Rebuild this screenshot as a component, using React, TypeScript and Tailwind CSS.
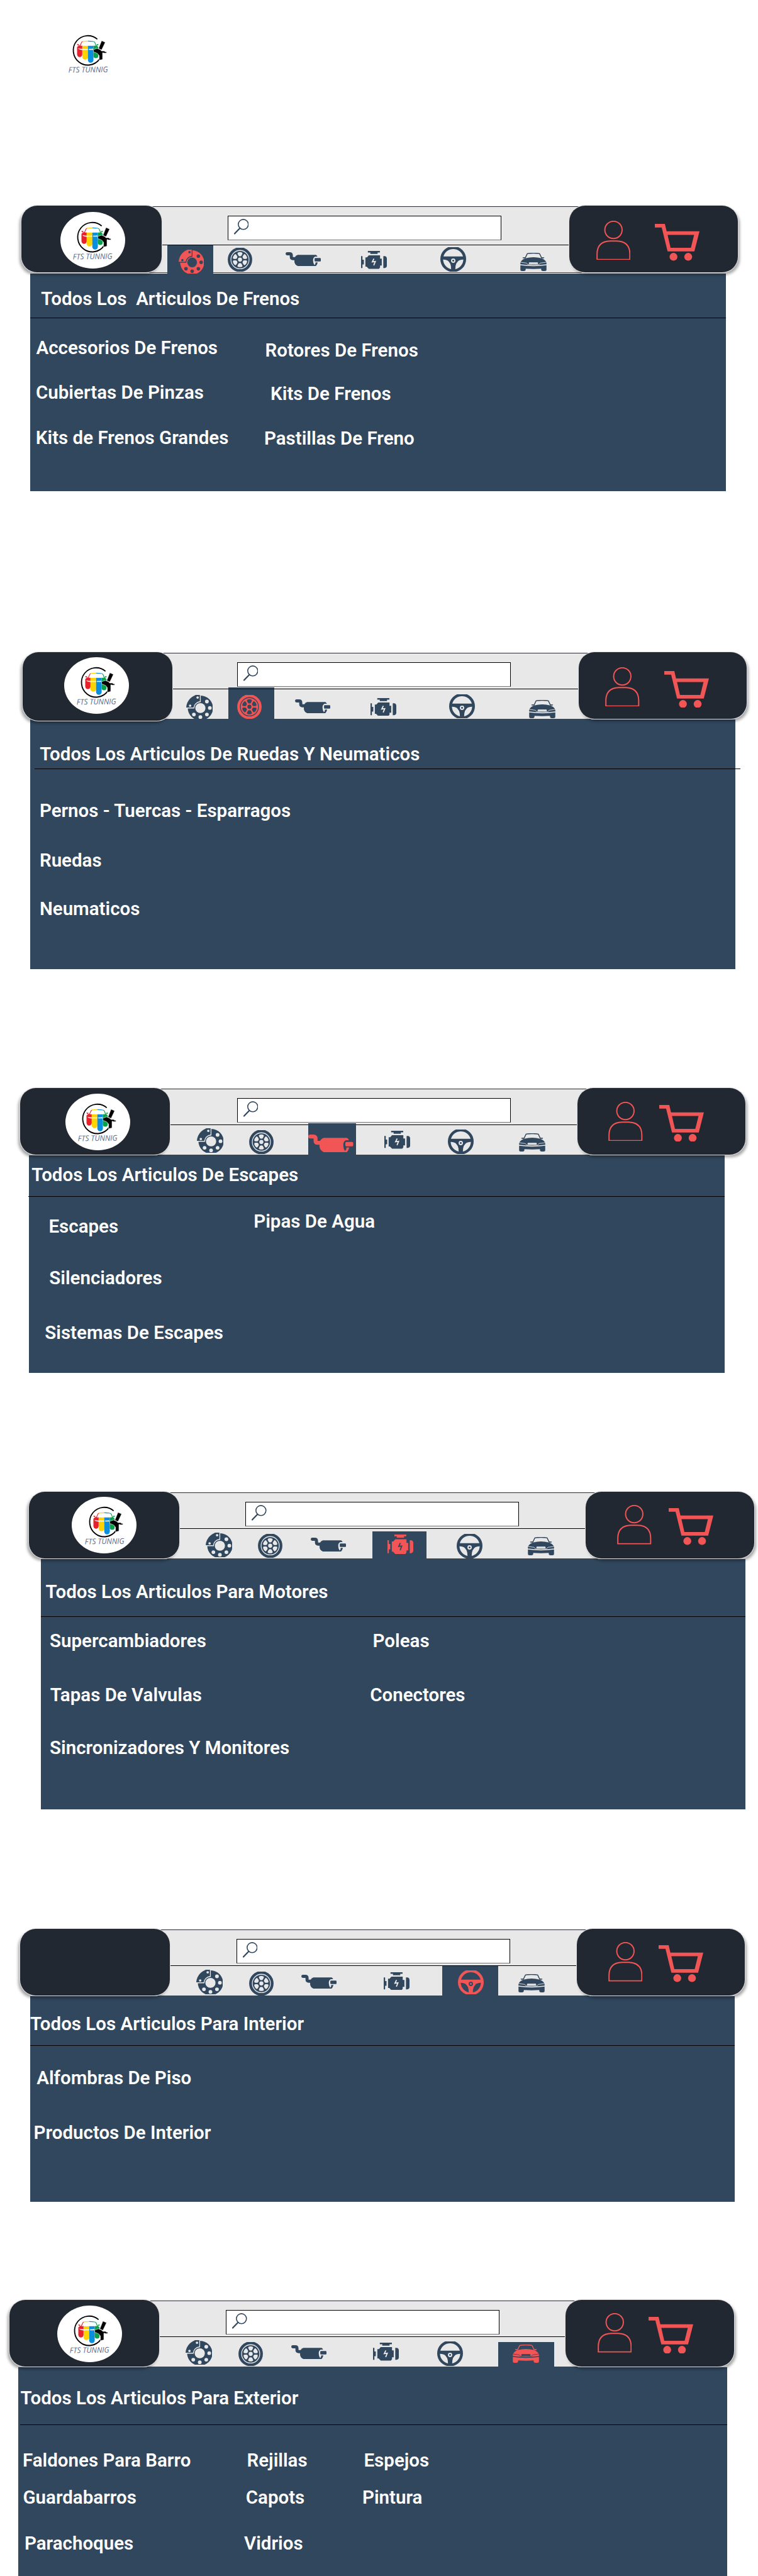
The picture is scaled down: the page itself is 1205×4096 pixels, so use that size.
import type { ReactNode } from "react";

type IconProps = { className: string; ink?: string; back?: string };

const NAVY = "#31475d";
const CORAL = "#f15555";
const BAR = "#e8e8e8";

function Svg({ box, className, children }: { box: string; className: string; children: ReactNode }) {
  return (
    <svg viewBox={box} preserveAspectRatio="none" className={"block shrink-0 " + className}>
      {children}
    </svg>
  );
}

function Disc({ className, ink = NAVY, back = BAR }: IconProps) {
  return (
    <Svg box="0 0 54 51" className={"overflow-hidden " + className}>
      <path fill={ink} d="M28 -1.5V13A14.5 14.5 0 0 0 15 26H0A29 29 0 0 1 28 -1.5Z" />
      <path fill={ink} d="M29.7 1.4A25.8 25.8 0 1 1 3.2 28H16.6A12.6 12.6 0 0 1 29.7 15Z" />
      <g fill={back}>
        <circle cx="29" cy="27.3" r="10.4" />
        <circle cx="42.3" cy="13.7" r="3.8" />
        <circle cx="48.3" cy="27" r="3.8" />
        <circle cx="42.3" cy="40.7" r="3.8" />
        <circle cx="29" cy="46" r="3.8" />
        <circle cx="15.7" cy="40.7" r="3.8" />
        <circle cx="23.3" cy="5.3" r="2.5" />
        <circle cx="8" cy="22.3" r="2.5" />
      </g>
    </Svg>
  );
}

function Wheel({ className, ink = NAVY, back = BAR }: IconProps) {
  return (
    <Svg box="0 0 53 51" className={"overflow-hidden " + className}>
      <circle cx="26.5" cy="25.3" r="26.4" fill={ink} />
      <circle cx="26.5" cy="25.3" r="19.6" fill="none" stroke={back} strokeWidth="1.7" />
      <g fill={back} transform="translate(26.5 25.3)">
        <circle r="4.4" />
        {[0, 60, 120, 180, 240, 300].map((a) => (
          <path
            key={a}
            transform={`rotate(${a})`}
            d="M-4.2 -15.4Q0 -16.8 4.2 -15.4Q6 -14.4 5.2 -12.2L2.8 -8Q0 -6.2 -2.8 -8L-5.2 -12.2Q-6 -14.4 -4.2 -15.4Z"
          />
        ))}
      </g>
    </Svg>
  );
}

function Exhaust({ className, ink = NAVY, back = BAR }: IconProps) {
  return (
    <Svg box="0 0 227 90" className={"overflow-hidden " + className}>
      <path d="M10 10H26Q37 10 37 21V31Q37 42 48 42H64" fill="none" stroke={ink} strokeWidth="20" strokeLinecap="round" />
      <path fill={ink} d="M78 17H196Q203 21 207 32V65Q203 84 194 90H78Q58 80 57 62V42Q60 24 78 17Z" />
      <path fill={back} d="M212 29H190Q177 35 177 53Q177 72 186 84Q194 76 193 66H212Z" />
      <rect x="187" y="38" width="40" height="22" rx="5" fill={ink} />
    </Svg>
  );
}

function Engine({ className, ink = NAVY, back = BAR }: IconProps) {
  return (
    <Svg box="0 0 167 115" className={"overflow-hidden " + className}>
      <g fill={ink}>
        <path d="M44 0H122V10H107V19H60V10H44Z" />
        <path d="M0 33H9V56H18V87H9V110H0Z" />
        <path d="M28 41H38L50 28H123V49H134V94H123V106L116 115H50L36 101H28Z" />
        <path d="M144 33H152Q167 34 167 50V94Q167 109 152 110H144Z" />
      </g>
      <path d="M83 50L73 70L92 68L82 92" fill="none" stroke={back} strokeWidth="7.5" />
    </Svg>
  );
}

function Steering({ className, ink = NAVY, back = BAR }: IconProps) {
  return (
    <Svg box="0 0 167 156" className={"overflow-hidden " + className}>
      <circle cx="83.5" cy="77" r="83.5" fill={ink} />
      <g fill={back}>
        <path d="M20 60A66 66 0 0 1 147 60Z" />
        <path d="M18 80Q50 78 64 106Q71 122 70 142A66 66 0 0 1 18 80Z" />
        <path d="M149 80Q117 78 103 106Q96 122 97 142A66 66 0 0 0 149 80Z" />
        <circle cx="83.5" cy="87" r="14" />
      </g>
      <circle cx="83.5" cy="87" r="6" fill={ink} />
    </Svg>
  );
}

function Car({ className, ink = NAVY, back = BAR }: IconProps) {
  return (
    <Svg box="0 0 169 119" className={"overflow-hidden " + className}>
      <path d="M32 34L44 8Q46 4 52 4Q85 1 117 4Q123 4 125 8L137 34" fill="none" stroke={ink} strokeWidth="6" />
      <g fill={ink}>
        <path d="M15 30L32 29L34 36H17Z" />
        <path d="M154 30L137 29L135 36H152Z" />
        <path d="M32 36Q85 22 137 36Q160 44 168 64V112Q168 119 158 119H145Q134 119 134 108V104Q85 108 35 104V108Q35 119 24 119H11Q1 119 1 112V64Q9 44 32 36Z" />
      </g>
      <g fill="none" stroke={back}>
        <rect x="56" y="64" width="57" height="8" rx="3" strokeWidth="3" fill={back} />
        <path d="M0 61L40 67L50 77H119L129 67L169 61" strokeWidth="3.5" />
        <path d="M0 78Q85 90 169 78" strokeWidth="6" />
      </g>
    </Svg>
  );
}

function Magnifier() {
  return (
    <Svg box="0 0 24 25" className="mt-[4px] ml-[9px] h-[24.5px] w-[23.7px]">
      <circle cx="15" cy="9" r="8.1" fill="none" stroke={NAVY} strokeWidth="1.6" />
      <path d="M9.6 15L1 24" stroke={NAVY} strokeWidth="2.2" strokeLinecap="round" />
    </Svg>
  );
}

function Person({ className }: { className: string }) {
  return (
    <Svg box="0 0 139 160" className={className}>
      <g fill="none" stroke={CORAL} strokeWidth="5">
        <circle cx="69.5" cy="37" r="35" />
        <path d="M3 157V133Q4 84 55 82H84Q135 84 136 133V157Z" />
      </g>
    </Svg>
  );
}

function Cart({ className }: { className: string }) {
  return (
    <Svg box="0 0 182 150" className={className}>
      <path
        fill={CORAL}
        fillRule="evenodd"
        d="M0 0H41L48 30H182L161 112H52L28 15H0ZM52 45L64 97H147L160 45Z"
      />
      <circle cx="76" cy="134" r="16" fill={CORAL} />
      <circle cx="136" cy="134" r="16" fill={CORAL} />
    </Svg>
  );
}

function Logo({ className }: { className: string }) {
  return (
    <Svg box="48 44 268 270" className={"h-[66.4px] w-[65.9px] overflow-visible " + className}>
      <path d="M238 74A94 95 0 1 0 252 203" fill="none" stroke="#000" strokeWidth="7.5" />
      <path fill="#e8202c" d="M107 124L119 114H141V172A17 17 0 0 1 107 172Z" />
      <path fill="#ffd200" d="M141 114H177V188A18 18 0 0 1 141 188Z" />
      <path fill="#0b8fdc" d="M177 114H213V208A18 18 0 0 1 177 208Z" />
      <path fill="#0aa14b" d="M213 114H234L244 124V180A15 15 0 0 1 213 182Z" />
      <path fill="#fff" d="M129 115L139 96Q141 93 150 92Q178 89 206 92Q216 93 218 97L227 115Q178 117 129 115Z" />
      <g fill="none" strokeWidth="4.5">
        <path d="M126 116L137 93Q139 89 144 88.5" stroke="#e8202c" />
        <path d="M141 89Q158 86 177 86" stroke="#ffd200" />
        <path d="M177 86Q196 86 213 89" stroke="#0b8fdc" />
        <path d="M213 89Q220 91 222 95L231 117" stroke="#0aa14b" />
      </g>
      <path fill="#e8202c" d="M106 105L120 107L118 114H111Z" />
      <path fill="#0aa14b" d="M246 105L233 107L235 114H242Z" />
      <path fill="#fff" d="M113 132Q124 136 142 137H177V143H150Q122 145 113 132Z" />
      <path fill="#fff" d="M183 143V137Q203 137 209 134L212 143Z" />
      <path d="M266 84L289 94L266 143L246 134Z" fill="#000" stroke="#fff" strokeWidth="2" />
      <path
        d="M212 142L236 133L256 141L266 150H285L287 155H297V164H283L272 161V205L250 210V180L240 167L222 158H214Z"
        fill="#000"
        stroke="#fff"
        strokeWidth="2.5"
      />
      <text
        x="51"
        y="290"
        transform="rotate(-0.8 51 290)"
        textLength="256"
        lengthAdjust="spacingAndGlyphs"
        fontFamily="'Open Sans', 'Noto Sans', sans-serif"
        fontStyle="italic"
        fontSize="50"
        fill="#5a6a88"
      >
        FTS TUNNIG
      </text>
    </Svg>
  );
}

function LeftBadge({ className, children }: { className: string; children?: ReactNode }) {
  return (
    <div
      className={
        "relative z-10 flex shrink-0 items-start rounded-[25px] bg-[#222831] shadow-[0_0_0_1px_#dedede,-3px_4px_4px_rgba(0,0,0,0.35)] " +
        className
      }
    >
      {children}
    </div>
  );
}

function LogoDisc({ className }: { className: string }) {
  return (
    <div className={"flex h-[90.5px] w-[103px] items-start rounded-[50%] bg-white " + className}>
      <Logo className="mt-[15.5px] ml-[19.1px]" />
    </div>
  );
}

function RightBadge({ className, children }: { className: string; children: ReactNode }) {
  return (
    <div
      className={
        "relative z-10 flex h-[106px] shrink-0 items-start rounded-[25px] bg-[#222831] shadow-[0_0_0_1px_#dedede,3px_4px_4px_rgba(0,0,0,0.35)] " +
        className
      }
    >
      {children}
    </div>
  );
}

function Bar({
  className,
  searchRow,
  searchMargin,
  children,
}: {
  className: string;
  searchRow: string;
  searchMargin: string;
  children: ReactNode;
}) {
  return (
    <div
      className={
        "-mx-[20px] mt-px flex h-[106px] shrink-0 flex-col border-t border-b border-t-[#2a2a32] border-b-[#3f4448] bg-[#e8e8e8] " +
        className
      }
    >
      <div className={"shrink-0 border-b border-black pt-[14.3px] " + searchRow}>
        <div className={"flex h-[39px] w-[435px] items-start border border-black border-b-[#777] bg-white " + searchMargin}>
          <Magnifier />
        </div>
      </div>
      <div className="flex min-h-0 grow items-start">{children}</div>
    </div>
  );
}

function Tab({ className, children }: { className: string; children: ReactNode }) {
  return (
    <div className={"-mb-[2px] flex shrink-0 items-start self-stretch bg-[#31475d] " + className}>{children}</div>
  );
}

function Header({ className, children }: { className: string; children: ReactNode }) {
  return <header className={"relative flex h-[107px] items-start " + className}>{children}</header>;
}

function Panel({ className, children }: { className: string; children: ReactNode }) {
  return (
    <div
      className={
        "flex shrink-0 flex-col bg-[#31475d] font-['Roboto',sans-serif] text-[29.5px] leading-[35px] font-semibold whitespace-pre text-white " +
        className
      }
    >
      {children}
    </div>
  );
}

export default function App() {
  return (
    <main className="flex h-[4096px] w-[1205px] flex-col overflow-hidden bg-white">
      <div className="h-[327px] shrink-0 pt-[55.1px] pl-[107.7px]">
        <Logo className="" />
      </div>

      <section className="flex shrink-0 flex-col">
        <Header className="ml-[34px]">
          <LeftBadge className="h-[106px] w-[223px]">
            <LogoDisc className="mt-[9.9px] ml-[62.1px]" />
          </LeftBadge>
          <Bar className="w-[688px]" searchRow="h-[61px]" searchMargin="ml-[124.6px]">
            <Tab className="ml-[28.5px] w-[73.3px] pt-[6.5px] pl-[18.5px]">
              <Disc className="h-[38px] w-[40px]" ink={CORAL} back={NAVY} />
            </Tab>
            <Wheel className="mt-[4.4px] ml-[22.8px] h-[38px] w-[39px]" />
            <Exhaust className="mt-[11.2px] ml-[53.2px] h-[22px] w-[56px]" />
            <Engine className="mt-[9px] ml-[64.4px] h-[28.5px] w-[41px]" />
            <Steering className="mt-[3.1px] ml-[84.5px] h-[38.5px] w-[41px]" />
            <Car className="mt-[12.1px] ml-[86px] h-[29px] w-[42px]" />
          </Bar>
          <RightBadge className="w-[267.5px]">
            <Person className="mt-[23.6px] ml-[42.7px] h-[62.8px] w-[54.5px]" />
            <Cart className="mt-[29.2px] ml-[39.2px] h-[58.6px] w-[71px]" />
          </RightBadge>
        </Header>
        <Panel className="mt-px ml-[48px] h-[345.5px] w-[1106px]">
          <h2 className="h-[70px] pt-[22.9px] pl-[17.3px]">Todos Los  Articulos De Frenos</h2>
          <div className="h-px bg-black" />
          <div className="flex items-start">
            <ul className="w-[372px]">
              <li className="mt-[29.5px] ml-[9.5px]">Accesorios De Frenos</li>
              <li className="mt-[36.4px] ml-[9px]">Cubiertas De Pinzas</li>
              <li className="mt-[36.8px] ml-[8.8px]">Kits de Frenos Grandes</li>
            </ul>
            <ul>
              <li className="mt-[33.9px] ml-[1.6px]">Rotores De Frenos</li>
              <li className="mt-[33.9px] ml-[10.1px]">Kits De Frenos</li>
              <li className="mt-[36.7px]">Pastillas De Freno</li>
            </ul>
          </div>
        </Panel>
      </section>

      <section className="mt-[256.5px] flex shrink-0 flex-col">
        <Header className="ml-[35.5px]">
          <LeftBadge className="h-[109px] w-[238px]">
            <LogoDisc className="mt-[7.6px] ml-[66.7px]" />
          </LeftBadge>
          <Bar className="w-[686.5px]" searchRow="h-[57px]" searchMargin="ml-[123.1px]">
            <Disc className="mt-[9px] ml-[42.4px] h-[39px] w-[42px]" />
            <Tab className="relative -mt-[3px] ml-[24.8px] w-[73px] flex-col">
              <div className="mt-[2px] h-px w-full bg-[#141b22]" />
              <Wheel className="mt-[8.7px] ml-[13.9px] h-[38px] w-[39px]" ink={CORAL} back={NAVY} />
            </Tab>
            <Exhaust className="mt-[15.5px] ml-[33.1px] h-[22px] w-[56px]" />
            <Engine className="mt-[13.5px] ml-[63.9px] h-[28.5px] w-[41px]" />
            <Steering className="mt-[7.6px] ml-[84.2px] h-[38.5px] w-[41px]" />
            <Car className="mt-[16.9px] ml-[86.6px] h-[29px] w-[42px]" />
          </Bar>
          <RightBadge className="w-[267.4px]">
            <Person className="mt-[23.7px] ml-[42.3px] h-[62.8px] w-[54.5px]" />
            <Cart className="mt-[29.6px] ml-[39.2px] h-[58.6px] w-[71px]" />
          </RightBadge>
        </Header>
        <Panel className="ml-[47.6px] h-[397px] w-[1121.3px]">
          <h2 className="h-[78px] pt-[37.6px] pl-[15.6px]">Todos Los Articulos De Ruedas Y Neumaticos</h2>
          <div className="ml-[7.7px] h-px w-[1121.3px] bg-black" />
          <ul className="flex flex-col">
            <li className="mt-[48.6px] ml-[15.3px]">Pernos - Tuercas - Esparragos</li>
            <li className="mt-[44px] ml-[15.3px]">Ruedas</li>
            <li className="mt-[42.6px] ml-[15.3px]">Neumaticos</li>
          </ul>
        </Panel>
      </section>

      <section className="mt-[189px] flex shrink-0 flex-col">
        <Header className="ml-[32.3px]">
          <LeftBadge className="h-[106px] w-[238.2px]">
            <LogoDisc className="mt-[8.7px] ml-[71.4px]" />
          </LeftBadge>
          <Bar className="w-[687.1px]" searchRow="h-[57px]" searchMargin="ml-[126.1px]">
            <Disc className="mt-[4.9px] ml-[62.3px] h-[39px] w-[42px]" />
            <Wheel className="mt-[8px] ml-[41.7px] h-[38px] w-[39px]" />
            <Tab className="relative -mt-[3px] ml-[54.8px] w-[75.3px] pt-[17.5px]">
              <Exhaust className="h-[28px] w-[71.5px]" ink={CORAL} back={NAVY} />
            </Tab>
            <Engine className="mt-[9.2px] ml-[45.4px] h-[28.5px] w-[41px]" />
            <Steering className="mt-[7.4px] ml-[60.4px] h-[38.5px] w-[41px]" />
            <Car className="mt-[13px] ml-[71.2px] h-[29px] w-[42px]" />
          </Bar>
          <RightBadge className="w-[267.4px]">
            <Person className="mt-[21.5px] ml-[49.9px] h-[62.8px] w-[54.5px]" />
            <Cart className="mt-[26.7px] ml-[26.1px] h-[58.6px] w-[71px]" />
          </RightBadge>
        </Header>
        <Panel className="ml-[46.1px] h-[346px] w-[1105.9px]">
          <h2 className="h-[65px] pt-[14.2px] pl-[4.2px]">Todos Los Articulos De Escapes</h2>
          <div className="-ml-[1.5px] h-px bg-black" />
          <div className="flex items-start">
            <ul className="w-[357.2px]">
              <li className="mt-[29.8px] ml-[31.4px]">Escapes</li>
              <li className="mt-[47px] ml-[32.2px]">Silenciadores</li>
              <li className="mt-[52.6px] ml-[25.2px]">Sistemas De Escapes</li>
            </ul>
            <ul>
              <li className="mt-[22.1px]">Pipas De Agua</li>
            </ul>
          </div>
        </Panel>
      </section>

      <section className="mt-[189px] flex shrink-0 flex-col">
        <Header className="ml-[46.1px]">
          <LeftBadge className="h-[106px] w-[239px]">
            <LogoDisc className="mt-[7.6px] ml-[68.4px]" />
          </LeftBadge>
          <Bar className="w-[686.3px]" searchRow="h-[57px]" searchMargin="ml-[125.3px]">
            <Disc className="mt-[6px] ml-[61.5px] h-[39px] w-[42px]" />
            <Wheel className="mt-[8.4px] ml-[41.8px] h-[38px] w-[39px]" />
            <Exhaust className="mt-[14.2px] ml-[44.7px] h-[22px] w-[56px]" />
            <Tab className="mt-[4.3px] ml-[41.6px] w-[86px] pt-[4.7px] pl-[23.9px]">
              <Engine className="h-[31px] w-[41px]" ink={CORAL} back={NAVY} />
            </Tab>
            <Steering className="mt-[8px] ml-[48.5px] h-[38.5px] w-[41px]" />
            <Car className="mt-[13.2px] ml-[72px] h-[29px] w-[42px]" />
          </Bar>
          <RightBadge className="w-[267.5px]">
            <Person className="mt-[21.3px] ml-[50px] h-[62.8px] w-[54.5px]" />
            <Cart className="mt-[26.1px] ml-[26.9px] h-[58.6px] w-[71px]" />
          </RightBadge>
        </Header>
        <Panel className="ml-[64.6px] h-[398px] w-[1120.4px]">
          <h2 className="h-[91px] pt-[35.2px] pl-[8px]">Todos Los Articulos Para Motores</h2>
          <div className="h-px bg-black" />
          <div className="flex items-start">
            <ul className="w-[523.6px]">
              <li className="mt-[20.5px] ml-[14.4px]">Supercambiadores</li>
              <li className="mt-[51.6px] ml-[15.2px]">Tapas De Valvulas</li>
              <li className="mt-[49.1px] ml-[14.4px]">Sincronizadores Y Monitores</li>
            </ul>
            <ul>
              <li className="mt-[20.5px] ml-[4.4px]">Poleas</li>
              <li className="mt-[51.6px]">Conectores</li>
            </ul>
          </div>
        </Panel>
      </section>

      <section className="mt-[190px] flex shrink-0 flex-col">
        <Header className="ml-[31.5px]">
          <LeftBadge className="h-[106px] w-[238.2px]" />
          <Bar className="w-[687.1px]" searchRow="h-[57px]" searchMargin="ml-[126.1px]">
            <Disc className="mt-[5.6px] ml-[62.3px] h-[39px] w-[42px]" />
            <Wheel className="mt-[8.6px] ml-[41.8px] h-[38px] w-[39px]" />
            <Exhaust className="mt-[14px] ml-[44.7px] h-[22px] w-[56px]" />
            <Engine className="mt-[9.5px] ml-[74.7px] h-[28.5px] w-[41px]" />
            <Tab className="ml-[52px] w-[89px] pt-[6.5px] pl-[24.6px]">
              <Steering className="h-[38.5px] w-[41px]" ink={CORAL} back={NAVY} />
            </Tab>
            <Car className="mt-[13.1px] ml-[31.6px] h-[29px] w-[42px]" />
          </Bar>
          <RightBadge className="w-[267.5px]">
            <Person className="mt-[21.4px] ml-[50px] h-[62.8px] w-[54.5px]" />
            <Cart className="mt-[26.2px] ml-[26.2px] h-[58.6px] w-[71px]" />
          </RightBadge>
        </Header>
        <Panel className="ml-[47.6px] h-[327px] w-[1120.4px]">
          <h2 className="h-[78px] pt-[27.1px] pl-[0.4px]">Todos Los Articulos Para Interior</h2>
          <div className="h-px bg-black" />
          <ul className="flex flex-col">
            <li className="mt-[34.2px] ml-[10.6px]">Alfombras De Piso</li>
            <li className="mt-[51.4px] ml-[6px]">Productos De Interior</li>
          </ul>
        </Panel>
      </section>

      <section className="mt-[156px] flex shrink-0 flex-col">
        <Header className="ml-[14.6px]">
          <LeftBadge className="h-[106px] w-[238.2px]">
            <LogoDisc className="mt-[8.5px] ml-[76.1px]" />
          </LeftBadge>
          <Bar className="w-[686.2px]" searchRow="h-[57px]" searchMargin="ml-[126.1px]">
            <Disc className="mt-[5.2px] ml-[62.2px] h-[39px] w-[42px]" />
            <Wheel className="mt-[7.8px] ml-[41.9px] h-[38px] w-[39px]" />
            <Exhaust className="mt-[13.4px] ml-[44.7px] h-[22px] w-[56px]" />
            <Engine className="mt-[9px] ml-[74.7px] h-[28.5px] w-[41px]" />
            <Steering className="mt-[7.3px] ml-[60.4px] h-[38.5px] w-[41px]" />
            <Tab className="mt-[7.5px] ml-[56.6px] w-[88.4px] pt-[4.4px] pl-[23.1px]">
              <Car className="h-[29px] w-[42px]" ink={CORAL} back={NAVY} />
            </Tab>
          </Bar>
          <RightBadge className="w-[268.4px]">
            <Person className="mt-[21.4px] ml-[50.9px] h-[62.8px] w-[54.5px]" />
            <Cart className="mt-[26.6px] ml-[26.2px] h-[58.6px] w-[71px]" />
          </RightBadge>
        </Header>
        <Panel className="ml-[29.2px] h-[333px] w-[1126.6px]">
          <h2 className="h-[91px] pt-[32.4px] pl-[3.4px]">Todos Los Articulos Para Exterior</h2>
          <div className="ml-[3.1px] h-px bg-black" />
          <div className="flex items-start">
            <ul className="w-[358.8px]">
              <li className="mt-[38.5px] ml-[6.8px]">Faldones Para Barro</li>
              <li className="mt-[24.4px] ml-[7.3px]">Guardabarros</li>
              <li className="mt-[38.2px] ml-[9.8px]">Parachoques</li>
            </ul>
            <ul className="w-[188px]">
              <li className="mt-[38.5px] ml-[4.5px]">Rejillas</li>
              <li className="mt-[24.4px] ml-[2.8px]">Capots</li>
              <li className="mt-[38.2px]">Vidrios</li>
            </ul>
            <ul>
              <li className="mt-[38.5px] ml-[2.5px]">Espejos</li>
              <li className="mt-[24.4px]">Pintura</li>
            </ul>
          </div>
        </Panel>
      </section>
    </main>
  );
}
